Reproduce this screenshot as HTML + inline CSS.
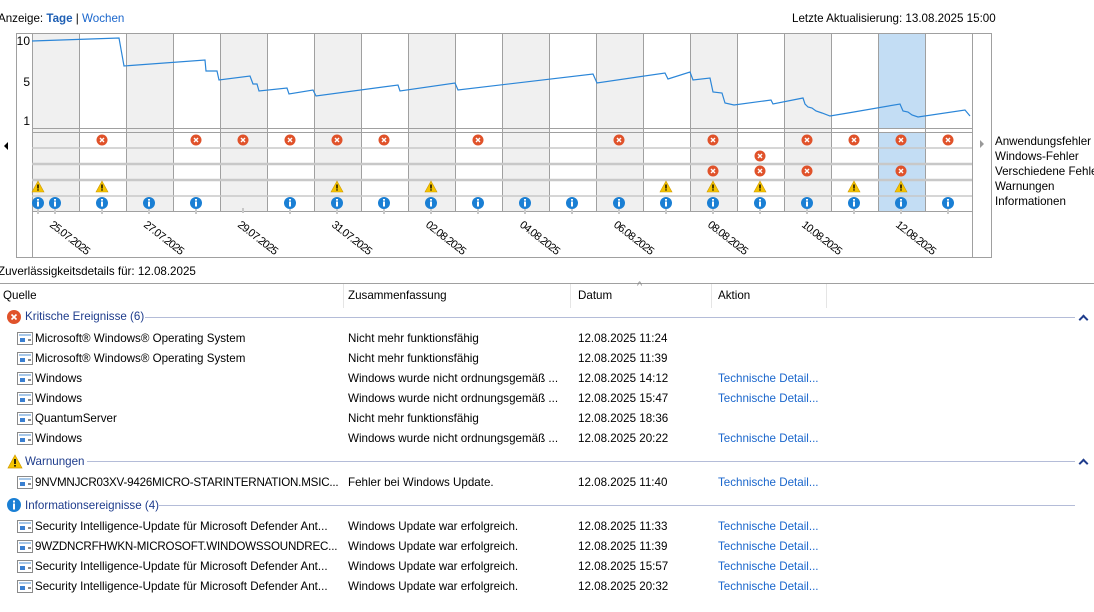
<!DOCTYPE html>
<html><head><meta charset="utf-8"><style>
*{margin:0;padding:0;box-sizing:border-box}
body{width:1094px;height:612px;overflow:hidden;background:#fff;font-family:"Liberation Sans",sans-serif;font-size:11.6px;color:#000;position:relative}
.a{position:absolute;white-space:nowrap}
.lnk{color:#1a66cc}
.grp{color:#1e3c8c}
.gl{position:absolute;height:1px;background:#b4bcd8}
.chev{position:absolute;left:1080px;width:7px;height:7px;border-left:2px solid #1e3c8c;border-top:2px solid #1e3c8c;transform:rotate(45deg)}
.ri{position:absolute;left:17px;width:16px;height:13px;border:1px solid #8a8a8a;background:#fff}
.ri:before{content:"";position:absolute;left:1px;top:1px;width:12px;height:2px;background:#a8c8e8}
.ri:after{content:"";position:absolute;left:2px;top:5px;width:5px;height:4px;background:#3a7fd0;box-shadow:7px 0 0 -1px #888}
</style></head><body>
<div class="a" style="left:-2px;top:12px">Anzeige: <span class="lnk" style="color:#1e5fb4;font-weight:bold">Tage</span> | <span class="lnk">Wochen</span></div>
<div class="a" style="left:792px;top:12px">Letzte Aktualisierung: 13.08.2025 15:00</div>
<svg class="a" style="left:0;top:0" width="1094" height="262" viewBox="0 0 1094 262">
<defs>
<g id="e"><circle r="5.5" fill="#e0522a"/><path d="M-2-2L2 2M2-2L-2 2" stroke="#fff" stroke-width="1.4"/></g>
<g id="w"><path d="M0-6L6 5H-6Z" fill="#f5c400" stroke="#d09a00" stroke-width=".6"/><rect x="-.7" y="-2.5" width="1.4" height="4" fill="#000"/><rect x="-.7" y="2.3" width="1.4" height="1.3" fill="#000"/></g>
<g id="i"><line x1="0" y1="6" x2="0" y2="11" stroke="#c8c8c8" stroke-width="2"/><circle r="6" fill="#1a7fd4"/><rect x="-1" y="-1.5" width="2" height="5" fill="#fff"/><rect x="-1" y="-4" width="2" height="1.6" fill="#fff"/></g>
</defs>
<g fill="#f0f0f0">
<rect x="32" y="33" width="47" height="178"/><rect x="126" y="33" width="47" height="178"/><rect x="220" y="33" width="47" height="178"/><rect x="314" y="33" width="47" height="178"/><rect x="408" y="33" width="47" height="178"/><rect x="502" y="33" width="47" height="178"/><rect x="596" y="33" width="47" height="178"/><rect x="690" y="33" width="47" height="178"/><rect x="784" y="33" width="47" height="178"/>
</g>
<rect x="878" y="34" width="47" height="94" fill="#c3ddf4"/><rect x="878" y="133" width="47" height="78" fill="#c3ddf4"/>
<g stroke="#a0a0a0" stroke-width="1" fill="none">
<rect x="16.5" y="33.5" width="975" height="224"/>
<line x1="32.5" y1="33" x2="32.5" y2="258"/><line x1="972.5" y1="33" x2="972.5" y2="258"/>
<line x1="32" y1="128.5" x2="972" y2="128.5"/><line x1="32" y1="132.5" x2="972" y2="132.5"/><line x1="32" y1="211.5" x2="972" y2="211.5"/>
<path d="M79.5 33V211M126.5 33V211M173.5 33V211M220.5 33V211M267.5 33V211M314.5 33V211M361.5 33V211M408.5 33V211M455.5 33V211M502.5 33V211M549.5 33V211M596.5 33V211M643.5 33V211M690.5 33V211M737.5 33V211M784.5 33V211M831.5 33V211M878.5 33V211M925.5 33V211"/>
</g>
<g stroke="#c8c8c8"><line x1="32" y1="148" x2="972" y2="148" stroke-width="1.5"/><line x1="32" y1="164" x2="972" y2="164" stroke-width="2.5"/><line x1="32" y1="180" x2="972" y2="180" stroke-width="2.5"/><line x1="32" y1="196" x2="972" y2="196" stroke-width="1.5"/></g>
<g font-family="Liberation Sans" font-size="12" fill="#000" text-anchor="end"><text x="30" y="45">10</text><text x="30" y="86">5</text><text x="30" y="125">1</text></g>
<polyline fill="none" stroke="#2b86d8" stroke-width="1.2" points="32,41 119,38 124,66 205,60 206,71 217,71 219,80 250,76 253,84 257,84 259,91 287,88 289,94 313,90 316,96 398,85 400,91 455,83 458,90 593,74 597,83 665,73 668,79 690,72 693,80 710,78 713,92 722,93 725,103 734,105 771,100 773,104 803,98 805,104 808,107 812,108 816,111 822,113 830,116 848,113 900,104 903,111 908,112 912,115 918,117 965,110 970,116"/>
<path d="M4 146L8 142V150Z" fill="#000"/><path d="M980 140L984 144L980 148Z" fill="#999"/>
<g font-family="Liberation Sans" font-size="11.6" fill="#000"><text x="995" y="145">Anwendungsfehler</text><text x="995" y="160">Windows-Fehler</text><text x="995" y="175">Verschiedene Fehler</text><text x="995" y="190">Warnungen</text><text x="995" y="205">Informationen</text></g>
<g transform="translate(0,140)"><use href="#e" x="102"/><use href="#e" x="196"/><use href="#e" x="243"/><use href="#e" x="290"/><use href="#e" x="337"/><use href="#e" x="384"/><use href="#e" x="478"/><use href="#e" x="619"/><use href="#e" x="713"/><use href="#e" x="807"/><use href="#e" x="854"/><use href="#e" x="901"/><use href="#e" x="948"/></g>
<g transform="translate(0,156)"><use href="#e" x="760"/></g>
<g transform="translate(0,171)"><use href="#e" x="713"/><use href="#e" x="760"/><use href="#e" x="807"/><use href="#e" x="901"/></g>
<g transform="translate(0,187)"><use href="#w" x="38"/><use href="#w" x="102"/><use href="#w" x="337"/><use href="#w" x="431"/><use href="#w" x="666"/><use href="#w" x="713"/><use href="#w" x="760"/><use href="#w" x="854"/><use href="#w" x="901"/></g>
<line x1="243" y1="208" x2="243" y2="213" stroke="#c8c8c8" stroke-width="2"/>
<g transform="translate(0,203)"><use href="#i" x="38"/><use href="#i" x="55"/><use href="#i" x="102"/><use href="#i" x="149"/><use href="#i" x="196"/><use href="#i" x="290"/><use href="#i" x="337"/><use href="#i" x="384"/><use href="#i" x="431"/><use href="#i" x="478"/><use href="#i" x="525"/><use href="#i" x="572"/><use href="#i" x="619"/><use href="#i" x="666"/><use href="#i" x="713"/><use href="#i" x="760"/><use href="#i" x="807"/><use href="#i" x="854"/><use href="#i" x="901"/><use href="#i" x="948"/></g>
<g font-family="Liberation Sans" font-size="11" fill="#000" letter-spacing="-0.8">
<text transform="translate(49,226) rotate(38)">25.07.2025</text>
<text transform="translate(143,226) rotate(38)">27.07.2025</text>
<text transform="translate(237,226) rotate(38)">29.07.2025</text>
<text transform="translate(331,226) rotate(38)">31.07.2025</text>
<text transform="translate(425,226) rotate(38)">02.08.2025</text>
<text transform="translate(519,226) rotate(38)">04.08.2025</text>
<text transform="translate(613,226) rotate(38)">06.08.2025</text>
<text transform="translate(707,226) rotate(38)">08.08.2025</text>
<text transform="translate(801,226) rotate(38)">10.08.2025</text>
<text transform="translate(895,226) rotate(38)">12.08.2025</text>
</g>
</svg>
<div class="a" style="left:-2px;top:265px">Zuverlässigkeitsdetails für: 12.08.2025</div>
<div class="a" style="left:0;top:283px;width:1094px;height:1px;background:#a0a0a0"></div>
<div class="a" style="left:343px;top:284px;width:1px;height:24px;background:#e5e5e5"></div>
<div class="a" style="left:570px;top:284px;width:1px;height:24px;background:#e5e5e5"></div>
<div class="a" style="left:711px;top:284px;width:1px;height:24px;background:#e5e5e5"></div>
<div class="a" style="left:826px;top:284px;width:1px;height:24px;background:#e5e5e5"></div>
<div class="a" style="left:3px;top:289px">Quelle</div>
<div class="a" style="left:348px;top:289px">Zusammenfassung</div>
<div class="a" style="left:578px;top:289px">Datum</div>
<div class="a" style="left:637px;top:280px;color:#888;font-size:11px">^</div>
<div class="a" style="left:718px;top:289px">Aktion</div>

<svg class="a" style="left:6px;top:309px" width="16" height="16"><circle cx="8" cy="8" r="7" fill="#e0522a"/><path d="M5.5 5.5L10.5 10.5M10.5 5.5L5.5 10.5" stroke="#fff" stroke-width="1.6"/></svg>
<div class="a grp" style="left:25px;top:310px">Kritische Ereignisse (6)</div>
<div class="gl" style="left:145px;top:317px;width:930px"></div><div class="chev" style="top:316px"></div>

<div class="ri" style="top:332px"></div><div class="a" style="left:35px;top:332px">Microsoft® Windows® Operating System</div><div class="a" style="left:348px;top:332px">Nicht mehr funktionsfähig</div><div class="a" style="left:578px;top:332px">12.08.2025 11:24</div>
<div class="ri" style="top:352px"></div><div class="a" style="left:35px;top:352px">Microsoft® Windows® Operating System</div><div class="a" style="left:348px;top:352px">Nicht mehr funktionsfähig</div><div class="a" style="left:578px;top:352px">12.08.2025 11:39</div>
<div class="ri" style="top:372px"></div><div class="a" style="left:35px;top:372px">Windows</div><div class="a" style="left:348px;top:372px">Windows wurde nicht ordnungsgemäß ...</div><div class="a" style="left:578px;top:372px">12.08.2025 14:12</div><div class="a lnk" style="left:718px;top:372px">Technische Detail...</div>
<div class="ri" style="top:392px"></div><div class="a" style="left:35px;top:392px">Windows</div><div class="a" style="left:348px;top:392px">Windows wurde nicht ordnungsgemäß ...</div><div class="a" style="left:578px;top:392px">12.08.2025 15:47</div><div class="a lnk" style="left:718px;top:392px">Technische Detail...</div>
<div class="ri" style="top:412px"></div><div class="a" style="left:35px;top:412px">QuantumServer</div><div class="a" style="left:348px;top:412px">Nicht mehr funktionsfähig</div><div class="a" style="left:578px;top:412px">12.08.2025 18:36</div>
<div class="ri" style="top:432px"></div><div class="a" style="left:35px;top:432px">Windows</div><div class="a" style="left:348px;top:432px">Windows wurde nicht ordnungsgemäß ...</div><div class="a" style="left:578px;top:432px">12.08.2025 20:22</div><div class="a lnk" style="left:718px;top:432px">Technische Detail...</div>

<svg class="a" style="left:7px;top:454px" width="16" height="16"><path d="M8 1L15 14H1Z" fill="#f5c400" stroke="#d09a00" stroke-width=".7"/><rect x="7.2" y="5" width="1.6" height="5" fill="#000"/><rect x="7.2" y="11" width="1.6" height="1.6" fill="#000"/></svg>
<div class="a grp" style="left:25px;top:455px">Warnungen</div>
<div class="gl" style="left:87px;top:461px;width:988px"></div><div class="chev" style="top:460px"></div>
<div class="ri" style="top:476px"></div><div class="a" style="left:35px;top:476px;letter-spacing:-0.2px">9NVMNJCR03XV-9426MICRO-STARINTERNATION.MSIC...</div><div class="a" style="left:348px;top:476px">Fehler bei Windows Update.</div><div class="a" style="left:578px;top:476px">12.08.2025 11:40</div><div class="a lnk" style="left:718px;top:476px">Technische Detail...</div>

<svg class="a" style="left:6px;top:497px" width="16" height="16"><circle cx="8" cy="8" r="7" fill="#1a7fd4"/><rect x="7" y="6.5" width="2" height="6" fill="#fff"/><rect x="7" y="3.5" width="2" height="2" fill="#fff"/></svg>
<div class="a grp" style="left:25px;top:499px">Informationsereignisse (4)</div>
<div class="gl" style="left:159px;top:505px;width:916px"></div>
<div class="ri" style="top:520px"></div><div class="a" style="left:35px;top:520px">Security Intelligence-Update für Microsoft Defender Ant...</div><div class="a" style="left:348px;top:520px">Windows Update war erfolgreich.</div><div class="a" style="left:578px;top:520px">12.08.2025 11:33</div><div class="a lnk" style="left:718px;top:520px">Technische Detail...</div>
<div class="ri" style="top:540px"></div><div class="a" style="left:35px;top:540px;letter-spacing:-0.2px">9WZDNCRFHWKN-MICROSOFT.WINDOWSSOUNDREC...</div><div class="a" style="left:348px;top:540px">Windows Update war erfolgreich.</div><div class="a" style="left:578px;top:540px">12.08.2025 11:39</div><div class="a lnk" style="left:718px;top:540px">Technische Detail...</div>
<div class="ri" style="top:560px"></div><div class="a" style="left:35px;top:560px">Security Intelligence-Update für Microsoft Defender Ant...</div><div class="a" style="left:348px;top:560px">Windows Update war erfolgreich.</div><div class="a" style="left:578px;top:560px">12.08.2025 15:57</div><div class="a lnk" style="left:718px;top:560px">Technische Detail...</div>
<div class="ri" style="top:580px"></div><div class="a" style="left:35px;top:580px">Security Intelligence-Update für Microsoft Defender Ant...</div><div class="a" style="left:348px;top:580px">Windows Update war erfolgreich.</div><div class="a" style="left:578px;top:580px">12.08.2025 20:32</div><div class="a lnk" style="left:718px;top:580px">Technische Detail...</div>
</body></html>
